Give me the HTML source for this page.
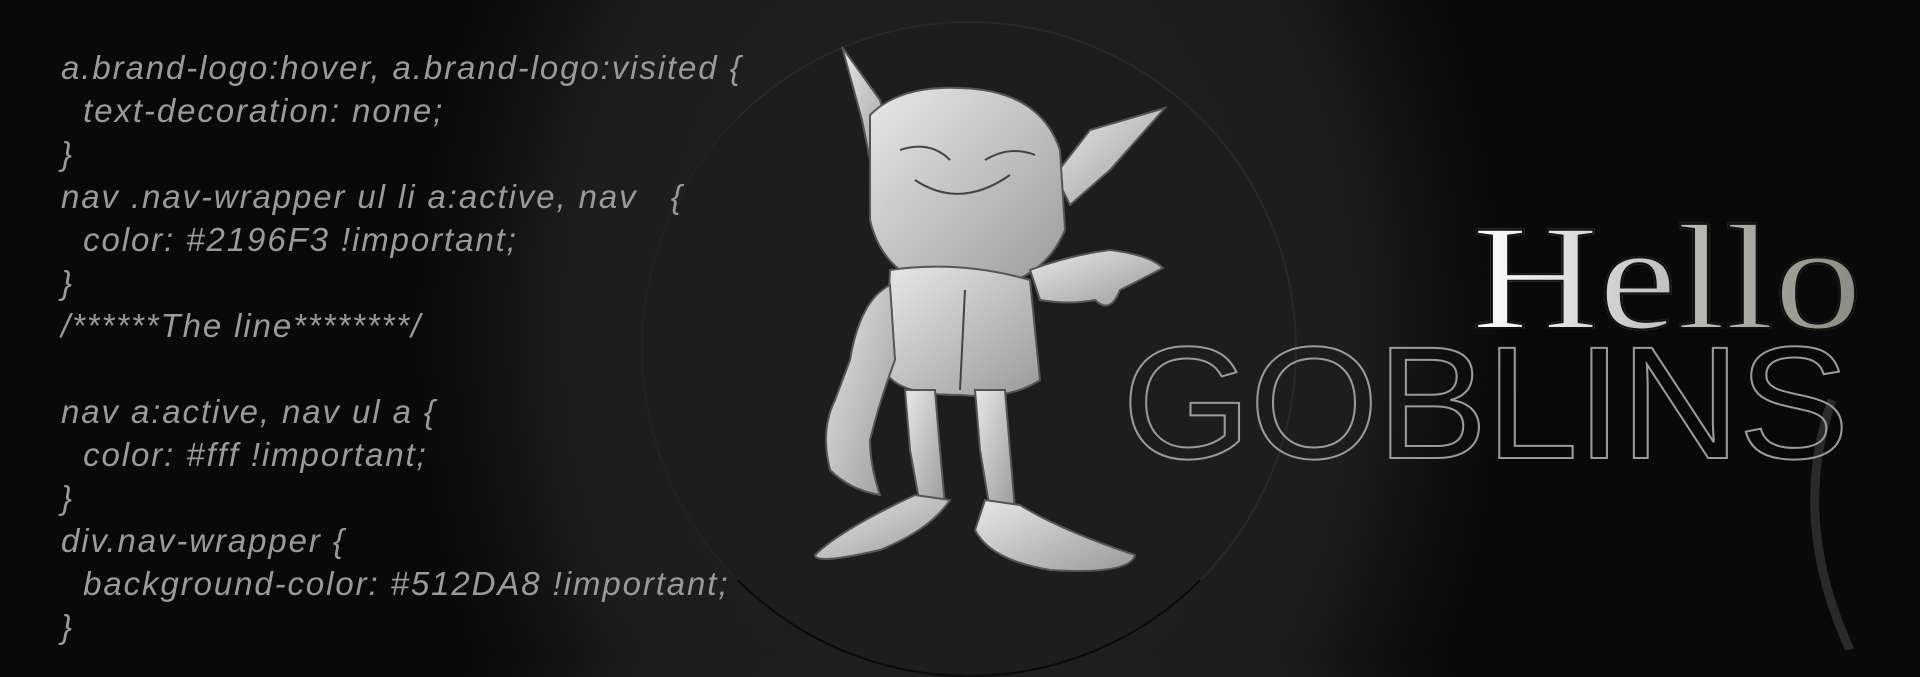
<!DOCTYPE html>
<html><head><meta charset="utf-8"><style>
html,body{margin:0;padding:0}
body{width:1920px;height:650px;overflow:hidden;position:relative;background:#090909;
background:radial-gradient(ellipse 560px 760px at 960px 330px,#1f1f1f 0%,#1d1d1d 70%,#0e0e0e 88%,#090909 100%);}
.code{position:absolute;left:61px;top:46px;font-family:"Liberation Sans",sans-serif;font-style:italic;font-size:33px;line-height:43px;color:#9a9a9a;white-space:pre;letter-spacing:1.9px}
.circ{position:absolute;left:641px;top:21px;width:656px;height:656px;border-radius:50%;background:#1d1d1d;border:2px solid #282828;border-bottom-color:#0a0a0a;border-left-color:#222;box-sizing:border-box}
.hello{position:absolute;left:1472px;top:178px;font-family:"Liberation Serif",serif;font-size:150px;line-height:200px;color:#ddd;transform:scaleX(1.17);transform-origin:left top;
background:linear-gradient(90deg,#fff,#ccc 40%,#8a8a80 100%);-webkit-background-clip:text;background-clip:text;-webkit-text-fill-color:transparent;-webkit-text-stroke:2px #111;letter-spacing:0}
.gob{position:absolute;left:1122px;top:318px;font-family:"Liberation Sans",sans-serif;font-size:160px;line-height:170px;color:transparent;-webkit-text-stroke:2px #9a9a9a;transform:scaleX(1.04);transform-origin:left top;letter-spacing:-2px}
</style></head><body>
<div class="circ"></div>
<div class="code">a.brand-logo:hover, a.brand-logo:visited {
  text-decoration: none;
}
nav .nav-wrapper ul li a:active, nav   {
  color: #2196F3 !important;
}
/******The line********/

nav a:active, nav ul a {
  color: #fff !important;
}
div.nav-wrapper {
  background-color: #512DA8 !important;
}</div>
<svg style="position:absolute;left:0;top:0" width="1920" height="650">
<defs><linearGradient id="g" x1="0" y1="0" x2="1" y2="1"><stop offset="0" stop-color="#e8e8e8"/><stop offset="1" stop-color="#9a9a9a"/></linearGradient></defs>
<g fill="url(#g)" stroke="#555" stroke-width="2">
<path d="M842 47 L880 100 L895 150 L870 160 L862 120 Z"/>
<path d="M1165 108 L1090 130 L1055 175 L1070 205 L1110 170 Z"/>
<path d="M870 115 Q900 85 960 88 Q1040 90 1060 150 L1065 230 Q1040 290 960 290 Q885 285 870 220 Z"/>
<path d="M890 270 Q960 260 1030 280 L1040 380 Q1010 400 960 395 Q895 395 885 370 Z"/>
<path d="M1030 270 Q1070 255 1110 250 Q1150 255 1163 268 Q1140 280 1120 290 Q1110 315 1095 300 Q1070 305 1040 300 Z"/>
<path d="M890 285 Q860 300 850 360 L835 400 Q820 430 830 470 Q850 490 880 495 Q870 465 870 440 Q880 400 895 360 Z"/>
<path d="M905 390 L935 390 L940 450 L945 505 L920 505 L910 450 Z"/>
<path d="M975 390 L1005 390 L1010 450 L1015 510 L990 510 L980 450 Z"/>
<path d="M915 495 L950 500 Q930 530 880 550 Q815 565 815 555 Q840 530 915 495 Z"/>
<path d="M985 500 L1020 505 Q1060 530 1135 555 Q1130 575 1050 570 Q990 560 975 530 Z"/>
</g>
<g fill="none" stroke="#444" stroke-width="2"><path d="M915 180 Q960 210 1010 175"/><path d="M900 150 Q930 140 950 160"/><path d="M985 160 Q1010 145 1035 155"/><path d="M965 290 L960 390"/></g>
<path d="M1832 400 Q1790 520 1850 650" fill="none" stroke="#2a2a2a" stroke-width="9"/>
</svg>
<div class="gob">GOBLINS</div>
<div class="hello">Hello</div>
</body></html>
